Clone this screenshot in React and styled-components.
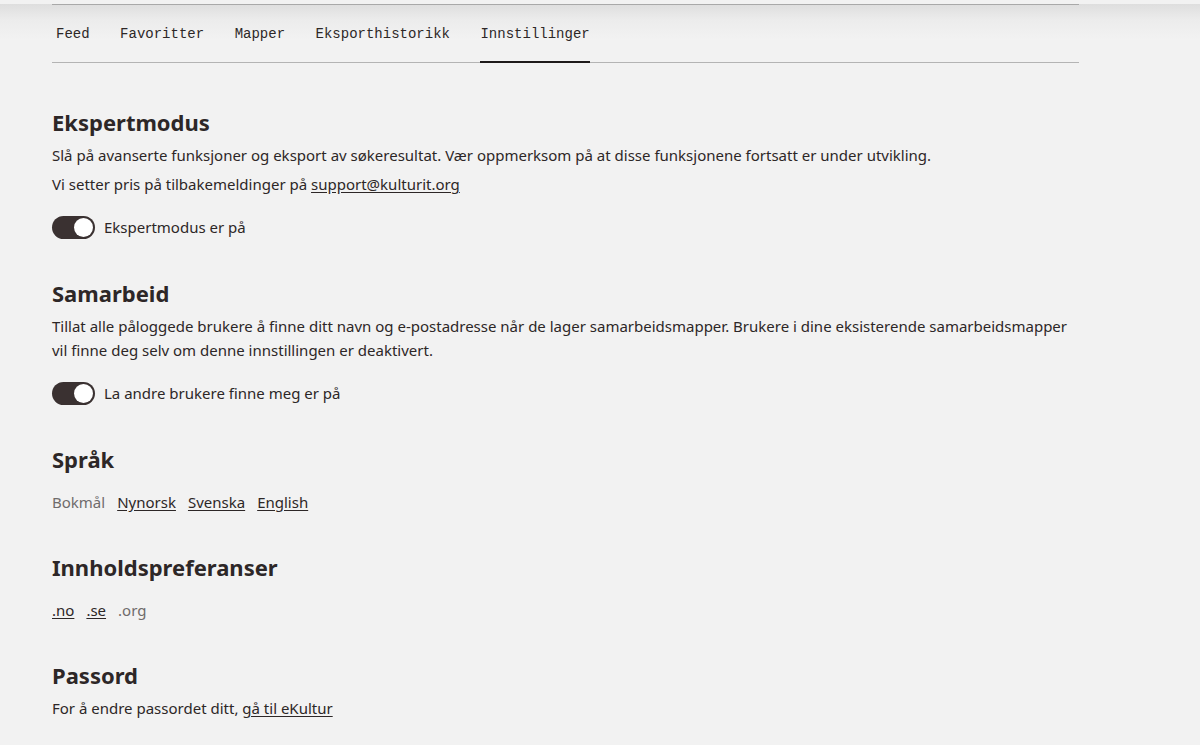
import React from 'react';
import styled, { createGlobalStyle } from 'styled-components';

const Global = createGlobalStyle`
  html, body {
    margin: 0;
    padding: 0;
    background: #f2f2f2;
  }
  body {
    font-family: 'Noto Sans', 'Liberation Sans', Arial, sans-serif;
    color: #2d2727;
  }
`;

// skyggen fra toppmenyen
const Page = styled.div`
  min-height: 745px;
  background: linear-gradient(to bottom, #dedede 0px, #ececec 16px, #f2f2f2 36px);
  padding: 0 121px 0 52px;
`;

const Tabs = styled.nav`
  display: flex;
  gap: 30.5px;
  padding-left: 4px;
  border-top: 1px solid #a9a9a9;
  border-bottom: 1px solid #b4b4b4;
  margin-top: 4px;
`;

const Tab = styled.a`
  font-family: 'Liberation Mono', 'DejaVu Sans Mono', monospace;
  font-size: 14px;
  color: #2d2727;
  text-decoration: none;
  height: 58px;
  display: flex;
  align-items: center;
  box-sizing: border-box;
  margin-bottom: -1px;
  border-bottom: 2px solid ${p => (p.active ? '#1e1a1a' : 'transparent')};
  padding-top: 2px;
`;

const Content = styled.main`
  padding-top: 45px;
  display: flex;
  flex-direction: column;
  gap: 40px;
`;

const Section = styled.section`
  display: flex;
  flex-direction: column;
`;

const Heading = styled.h2`
  margin: 0 0 7px;
  font-size: 22px;
  line-height: 28px;
  font-weight: 700;
  color: #2d2727;
`;

const Text = styled.p`
  margin: 0 0 5px;
  font-size: 15px;
  line-height: 24px;
`;

const Link = styled.a`
  color: #2d2727;
  text-decoration: underline;
  text-underline-offset: 2px;
`;

const ToggleRow = styled.label`
  display: flex;
  align-items: center;
  gap: 9px;
  margin-top: 14px;
  font-size: 15px;
  line-height: 24px;
`;

const Track = styled.span`
  width: 43px;
  height: 23px;
  border-radius: 12px;
  background: #3a3131;
  position: relative;
  flex-shrink: 0;
`;

const Knob = styled.span`
  position: absolute;
  top: 2px;
  right: 2px;
  width: 19px;
  height: 19px;
  border-radius: 50%;
  background: #fff;
`;

const Options = styled.div`
  display: flex;
  gap: 12px;
  margin-top: 11px;
  font-size: 15px;
  line-height: 22px;
`;

const Current = styled.span`
  color: #6f6b6b;
`;

const Toggle = ({ children }) => (
  <ToggleRow>
    <Track>
      <Knob />
    </Track>
    {children}
  </ToggleRow>
);

const tabs = ['Feed', 'Favoritter', 'Mapper', 'Eksporthistorikk', 'Innstillinger'];

export default function App() {
  return (
    <Page>
      <Global />
      <Tabs>
        {tabs.map(t => (
          <Tab key={t} href="#" active={t === 'Innstillinger' ? 1 : 0}>
            {t}
          </Tab>
        ))}
      </Tabs>
      <Content>
        <Section>
          <Heading>Ekspertmodus</Heading>
          <Text>
            Slå på avanserte funksjoner og eksport av søkeresultat. Vær oppmerksom på at disse
            funksjonene fortsatt er under utvikling.
          </Text>
          <Text>
            Vi setter pris på tilbakemeldinger på <Link href="#">support@kulturit.org</Link>
          </Text>
          <Toggle>Ekspertmodus er på</Toggle>
        </Section>
        <Section>
          <Heading>Samarbeid</Heading>
          <Text>
            Tillat alle påloggede brukere å finne ditt navn og e-postadresse når de lager
            samarbeidsmapper. Brukere i dine eksisterende samarbeidsmapper vil finne deg selv om
            denne innstillingen er deaktivert.
          </Text>
          <Toggle>La andre brukere finne meg er på</Toggle>
        </Section>
        <Section>
          <Heading>Språk</Heading>
          <Options>
            <Current>Bokmål</Current>
            <Link href="#">Nynorsk</Link>
            <Link href="#">Svenska</Link>
            <Link href="#">English</Link>
          </Options>
        </Section>
        <Section>
          <Heading>Innholdspreferanser</Heading>
          <Options>
            <Link href="#">.no</Link>
            <Link href="#">.se</Link>
            <Current>.org</Current>
          </Options>
        </Section>
        <Section>
          <Heading>Passord</Heading>
          <Text>
            For å endre passordet ditt, <Link href="#">gå til eKultur</Link>
          </Text>
        </Section>
      </Content>
    </Page>
  );
}
